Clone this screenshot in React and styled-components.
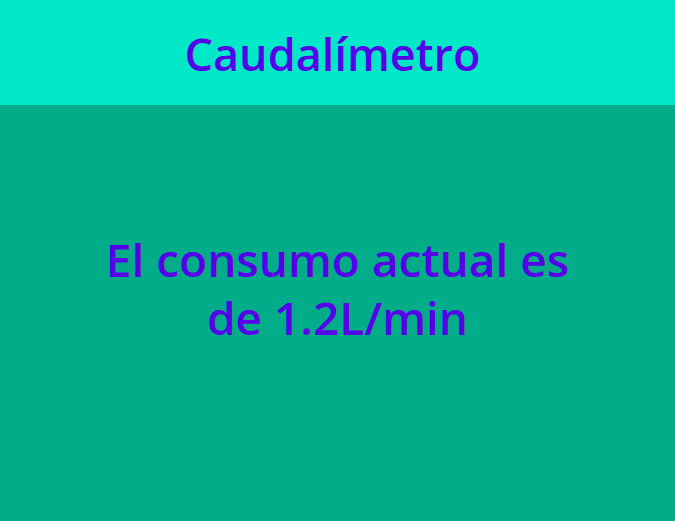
import styled, { createGlobalStyle } from "styled-components";

const GlobalStyle = createGlobalStyle`
  html, body {
    margin: 0;
    padding: 0;
    height: 100%;
  }
  body {
    font-family: "Open Sans", "Noto Sans", sans-serif;
  }
  #root {
    height: 100%;
  }
`;

const Page = styled.div`
  display: flex;
  flex-direction: column;
  height: 100vh;
`;

const Header = styled.header`
  height: 105px;
  box-sizing: border-box;
  padding-top: 2px;
  background-color: #00e8c8;
  display: flex;
  align-items: center;
  justify-content: center;
`;

const Title = styled.h1`
  margin: 0 10px 0 0;
  color: #5600ea;
  font-size: 45px;
  font-weight: 600;
`;

const Content = styled.main`
  flex: 1;
  background-color: #00ad88;
  display: flex;
  align-items: center;
  justify-content: center;
  padding-bottom: 50px;
`;

const Reading = styled.p`
  margin: 0;
  max-width: 490px;
  text-align: center;
  color: #5600ea;
  font-size: 46px;
  line-height: 58px;
  font-weight: 600;
`;

export default function App() {
  return (
    <Page>
      <GlobalStyle />
      <Header>
        <Title>Caudalímetro</Title>
      </Header>
      <Content>
        <Reading>El consumo actual es de 1.2L/min</Reading>
      </Content>
    </Page>
  );
}
